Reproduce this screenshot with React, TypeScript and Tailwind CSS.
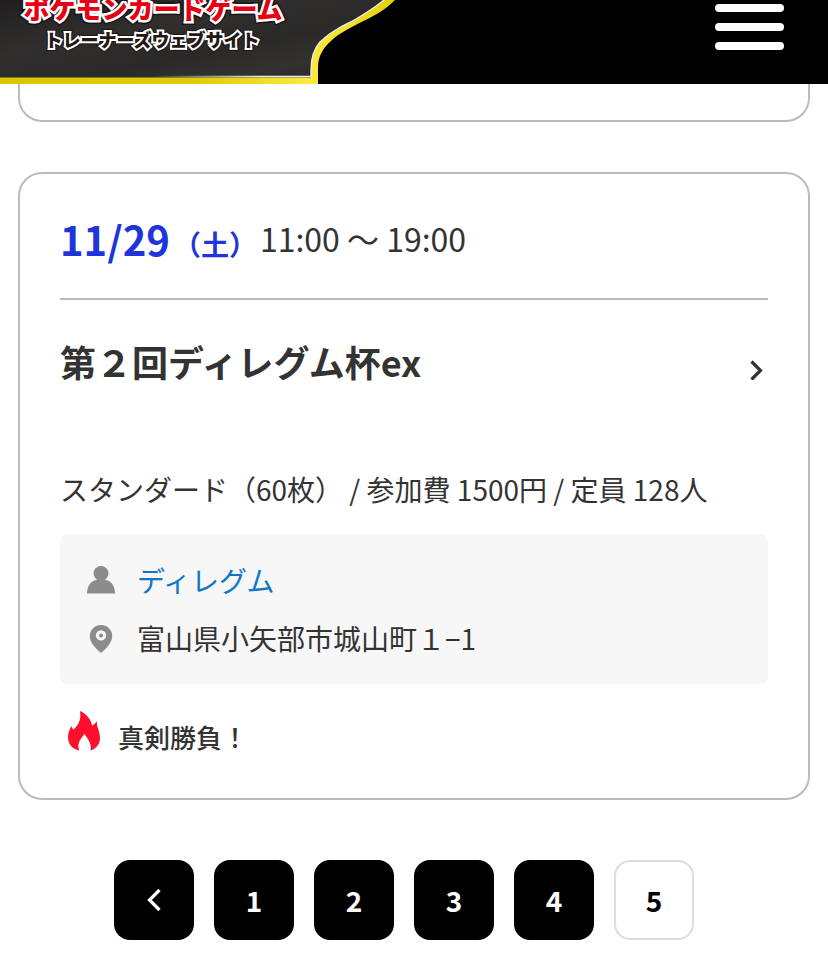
import React from "react";

const pages = ["1", "2", "3", "4", "5"];

function SiteLogo() {
  return (
    <svg
      className="block h-[84px] w-[400px] shrink-0"
      viewBox="0 0 400 84"
      role="img"
      aria-label="ポケモンカードゲーム トレーナーズウェブサイト"
    >
      <defs>
        <linearGradient id="panel" x1="0" y1="0" x2="1" y2="1">
          <stop offset="0" stopColor="#201f1e" />
          <stop offset="0.35" stopColor="#312f2d" />
          <stop offset="0.6" stopColor="#2b2927" />
          <stop offset="0.8" stopColor="#34322f" />
          <stop offset="1" stopColor="#252322" />
        </linearGradient>
        <linearGradient id="edge" x1="0" y1="0" x2="1" y2="0">
          <stop offset="0" stopColor="#d9c800" />
          <stop offset="0.5" stopColor="#decd08" />
          <stop offset="0.78" stopColor="#fbe93c" />
          <stop offset="0.88" stopColor="#f3e22c" />
          <stop offset="1" stopColor="#e0d000" />
        </linearGradient>
        <linearGradient id="shine" gradientUnits="userSpaceOnUse" x1="150" y1="0" x2="260" y2="0">
          <stop offset="0" stopColor="#f1eef0" stopOpacity="0" />
          <stop offset="1" stopColor="#f1eef0" />
        </linearGradient>
      </defs>
      <path d="M0 0H395C388 7 382 11 375 15C366 20 359 23 350 28C341 33 336 36 331 41C322 49 318 57 318 68V84H0Z" fill="url(#edge)" />
      <path d="M0 0H384C377 6 369 11 361 16C353 21 346 24 338 28.500C330 33 325 37 320 42C313 50 311 59 311 70V77.500H0Z" fill="url(#panel)" />
      <path d="M384 0C377 6 369 11 361 16C353 21 346 24 338 28.500C330 33 325 37 320 42C313 50 311 59 311 70V76.500H150" fill="none" stroke="url(#shine)" strokeWidth="1.300" />
      <g
        fontFamily="'Noto Sans CJK JP', sans-serif"
        fontWeight="900"
        textAnchor="middle"
        strokeLinejoin="miter"
        strokeMiterlimit="2"
      >
        <text x="153" y="19" fontSize="26" fill="#ffffff" stroke="#1a1414" strokeWidth="8" paintOrder="stroke">ポケモンカードゲーム</text>
        <text x="153" y="19" fontSize="26" fill="#e60012" stroke="#ffffff" strokeWidth="5" paintOrder="stroke">ポケモンカードゲーム</text>
        <text x="152" y="47" fontSize="18" fill="#ffffff" stroke="#1a1414" strokeWidth="6" paintOrder="stroke">トレーナーズウェブサイト</text>
        <text x="152" y="47" fontSize="18" fill="#231815" stroke="#ffffff" strokeWidth="4" paintOrder="stroke">トレーナーズウェブサイト</text>
      </g>
    </svg>
  );
}

function Header() {
  return (
    <header className="flex items-start justify-between overflow-hidden bg-black pr-11">
      <a href="#top">
        <SiteLogo />
      </a>
      <button type="button" aria-label="メニュー" className="flex w-[69px] flex-col gap-[11px] pt-1">
        <span className="h-2 w-full rounded-full bg-white" />
        <span className="h-2 w-full rounded-full bg-white" />
        <span className="h-2 w-full rounded-full bg-white" />
      </button>
    </header>
  );
}

function EventCard() {
  return (
    <article className="rounded-3xl border-2 border-[#bbb] px-10 pt-9 pb-10">
      <div className="flex h-[90px] items-start border-b-2 border-[#bbb]">
        <div className="flex items-start">
          <p className="text-[40px] leading-[58px] font-bold text-[#1f35db]">
            11/29<span className="mx-[3px] text-[28px]">（土）</span>
          </p>
          <p className="text-[32px] leading-[56px]">11:00 ～ 19:00</p>
        </div>
      </div>
      <a href="#event" className="mt-9 flex items-center justify-between">
        <h2 className="pb-[18px] text-[36px] leading-[50px] font-bold">第２回ディレグム杯ex</h2>
        <svg className="mr-1 h-5 w-4" viewBox="0 0 16 20" fill="none" stroke="#333" strokeWidth="3.200" aria-hidden="true">
          <path d="M3.500 1.500L12.500 10.500L3.500 19.500" />
        </svg>
      </a>
      <p className="mt-16 text-[28px] leading-[42px]">
        スタンダード（60枚） / 参加費 1500円 / 定員 128人
      </p>
      <div className="mt-6 flex flex-col gap-4 rounded-lg bg-[#f7f7f7] px-[27px] py-[25px] text-[28px] leading-[42px]">
        <div className="flex items-center gap-[22px]">
          <svg className="h-7 w-7 shrink-0" viewBox="0 0 28 28" fill="#8c8c8c" aria-hidden="true">
            <circle cx="14" cy="7.500" r="7.500" />
            <path d="M0 27.500C0 19 5 14 10 14H18C23 14 28 19 28 27.500Z" />
          </svg>
          <a href="#organizer" className="text-[#0f76c8]">ディレグム</a>
        </div>
        <div className="flex items-center gap-[22px]">
          <svg className="h-[30px] w-7 shrink-0" viewBox="0 0 28 30" fill="#8c8c8c" aria-hidden="true">
            <path
              fillRule="evenodd"
              d="M14 2A11.200 11.200 0 0 1 25.200 13.200C25.200 20 19 25.500 14 30C9 25.500 2.800 20 2.800 13.200A11.200 11.200 0 0 1 14 2ZM14 7.200A5.200 5.200 0 1 0 14 17.600A5.200 5.200 0 1 0 14 7.200Z"
            />
            <circle cx="14" cy="12.400" r="2" />
          </svg>
          <p>富山県小矢部市城山町１−1</p>
        </div>
      </div>
      <div className="mt-6 flex items-start gap-[18px] pl-2">
        <svg className="mt-[3px] h-10 w-8" viewBox="0 0 32 40" fill="#ff0f2e" aria-hidden="true">
          <path d="M12 0C18 2.500 23 8 24 14.500C26 13.500 27.500 12 29 10C28 15 32 20 32 27C32 33 28 38 22.500 39.500C24 33 20 28 16.500 23C12 28 8.500 34 11.500 39.500C4 38 0 33 0 26C0 21 2 18 3.500 15C4 17 4.500 18 5.500 18.500C10 14.500 13.500 9 12 0Z" />
        </svg>
        <p className="pt-2 text-[26px] leading-[42px] font-medium">真剣勝負！</p>
      </div>
    </article>
  );
}

function Pagination() {
  return (
    <nav aria-label="ページ" className="flex justify-center text-[28px] font-bold">
      <button
        type="button"
        aria-label="前へ"
        className="mr-5 flex h-20 w-20 items-center justify-center rounded-2xl bg-black"
      >
        <svg className="h-6 w-4" viewBox="0 0 16 24" fill="none" stroke="#fff" strokeWidth="3.200" aria-hidden="true">
          <path d="M13.500 2L3.500 12L13.500 22" />
        </svg>
      </button>
      {pages.map((page) => (
        <button
          key={page}
          type="button"
          aria-current={page === "5" ? "page" : undefined}
          className={
            page === "5"
              ? "mr-5 h-20 w-20 rounded-2xl border-2 border-[#ddd] bg-white text-black"
              : "mr-5 h-20 w-20 rounded-2xl border-2 border-black bg-black text-white"
          }
        >
          {page}
        </button>
      ))}
    </nav>
  );
}

export default function App() {
  return (
    <div className="bg-white font-['Noto_Sans_CJK_JP',sans-serif] text-[#333]">
      <Header />
      <main className="px-[18px] pb-[15px]">
        <div className="h-[38px] rounded-b-3xl border-2 border-t-0 border-[#bbb]" />
        <div className="pt-[50px] pb-[60px]">
          <EventCard />
        </div>
        <Pagination />
      </main>
    </div>
  );
}
